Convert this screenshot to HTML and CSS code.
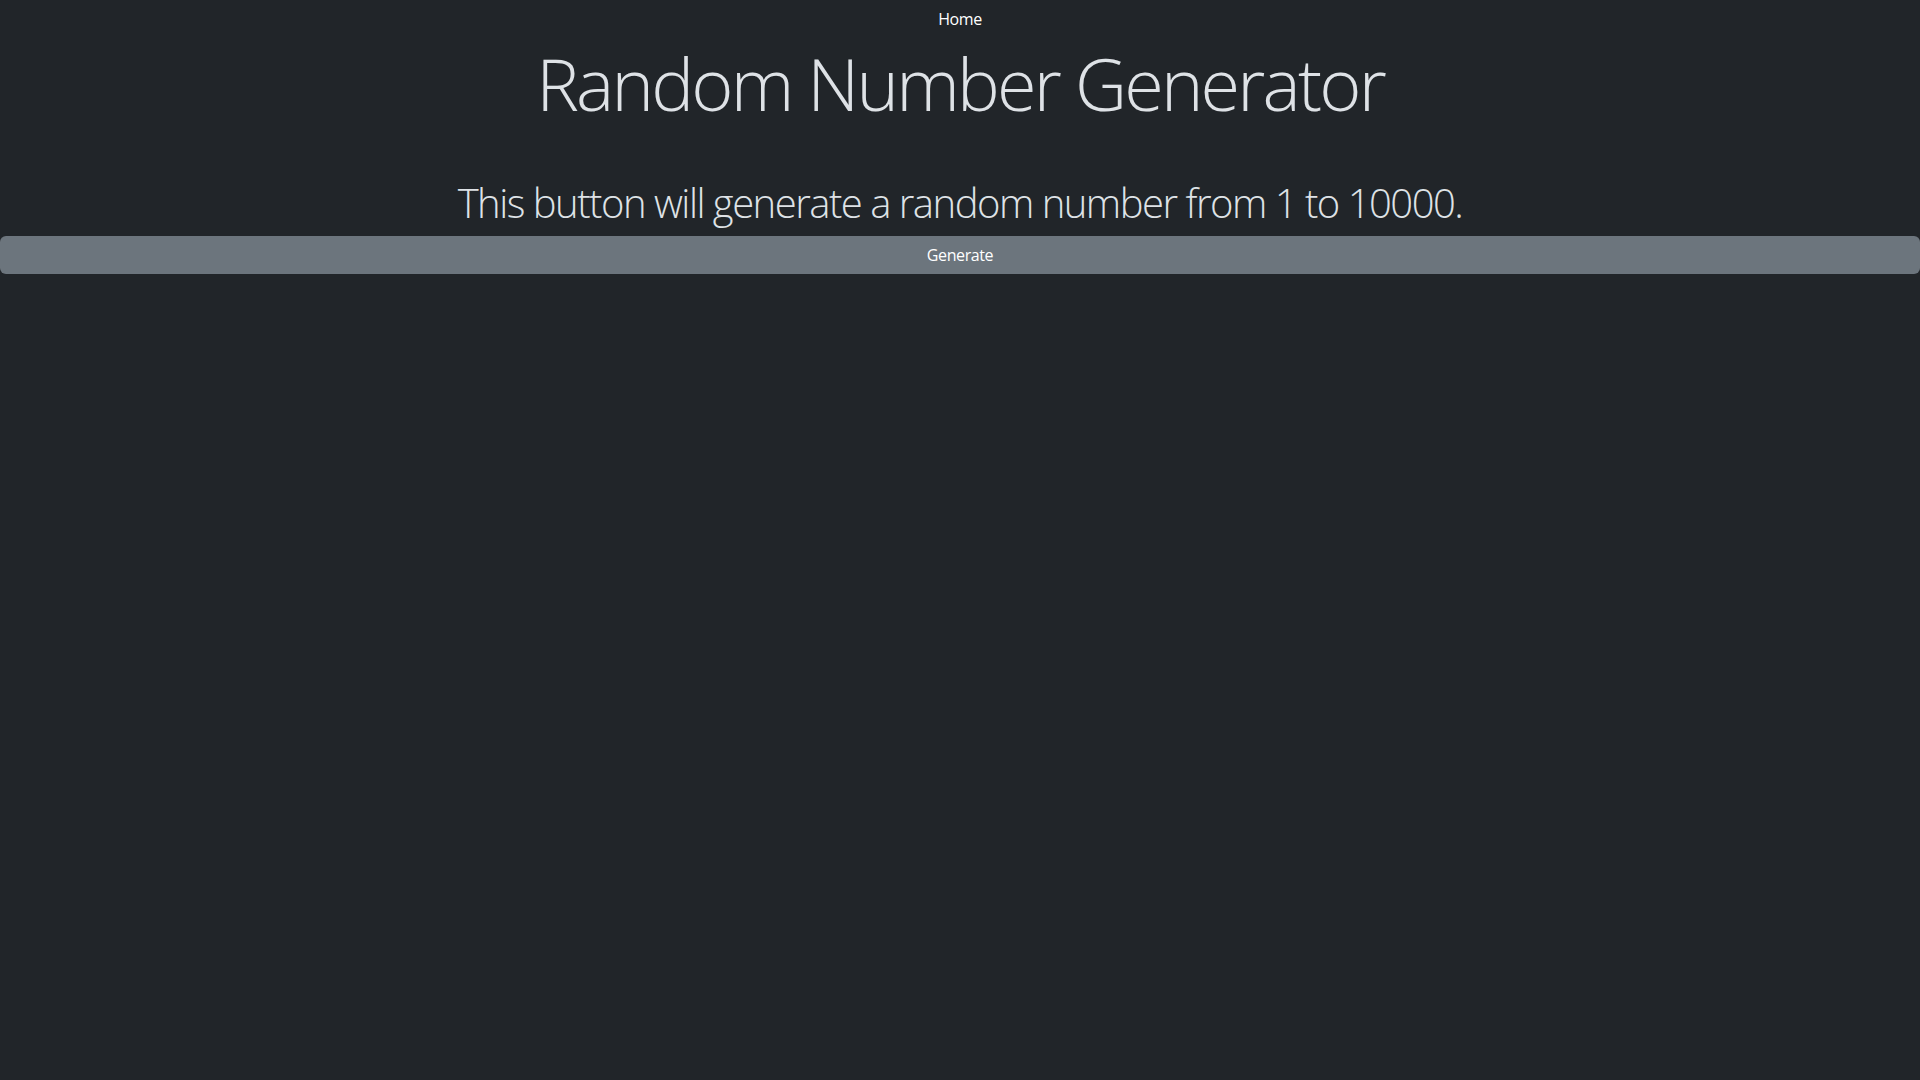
FILE: index.html
```html
<!DOCTYPE html>
<html lang="en">
<head>
<meta charset="utf-8">
<title>Random Number Generator</title>
<link rel="stylesheet" href="styles.css">
</head>
<body>
<nav class="nav">
  <a class="nav-link" href="#">Home</a>
</nav>
<main class="main">
  <h1 class="title">Random Number Generator</h1>
  <p class="lead-text">This button will generate a random number from 1 to 10000.</p>
  <button class="btn" type="button">Generate</button>
</main>
</body>
</html>
```
FILE: styles.css
```css
html, body {
  margin: 0;
  padding: 0;
  background: #212529;
  color: #dee2e6;
  font-family: "Open Sans", "Noto Sans", sans-serif;
}

.nav {
  display: flex;
  justify-content: center;
  padding: 7px 0 9px;
}

.nav-link {
  color: #ffffff;
  text-decoration: none;
  font-size: 16px;
  line-height: 24px;
  letter-spacing: -0.4px;
}

.main {
  display: flex;
  flex-direction: column;
  align-items: stretch;
}

.title {
  margin: 0 0 53px;
  text-align: center;
  font-size: 72px;
  font-weight: 300;
  line-height: 86.4px;
  letter-spacing: -2.8px;
  color: #dee2e6;
}

.lead-text {
  margin: 0 0 9px;
  text-align: center;
  font-size: 40px;
  font-weight: 300;
  line-height: 48px;
  letter-spacing: -1.5px;
  color: #dee2e6;
}

.btn {
  width: 100%;
  height: 38px;
  border: none;
  border-radius: 6px;
  background: #6c757d;
  color: #ffffff;
  font-family: inherit;
  font-size: 16px;
  line-height: 24px;
  letter-spacing: -0.4px;
  padding: 6px 12px;
  cursor: pointer;
}
```
